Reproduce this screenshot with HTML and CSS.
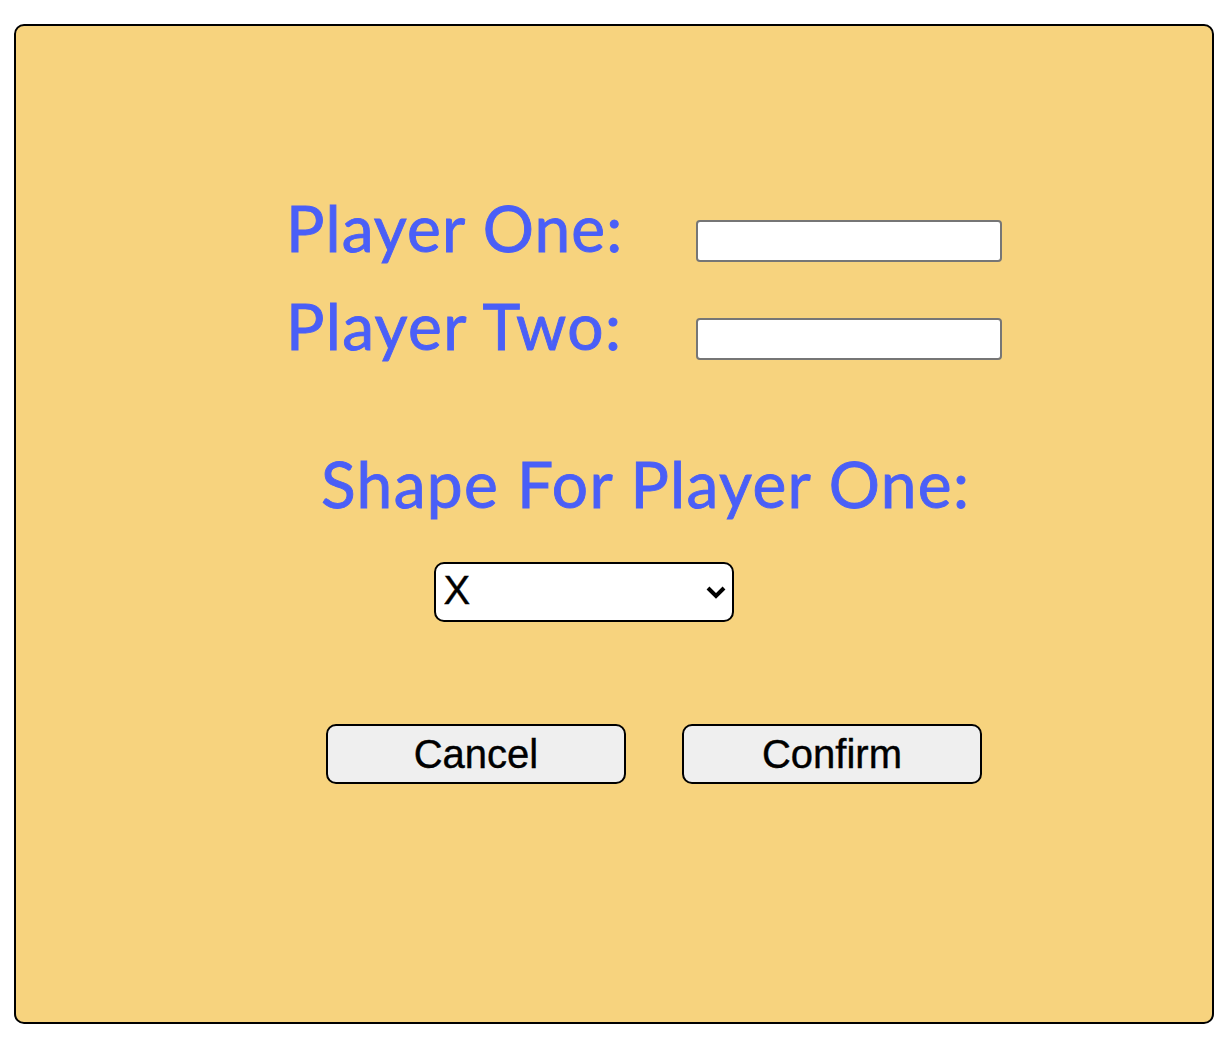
FILE: index.html
```html
<!DOCTYPE html>
<html lang="en">
<head>
<meta charset="utf-8">
<title>Players</title>
<link rel="stylesheet" href="styles.css">
</head>
<body>
<form class="panel">
  <div class="row">
    <label class="label one" for="one">Player One:</label>
    <input class="field" id="one" type="text">
  </div>
  <div class="row">
    <label class="label two" for="two">Player Two:</label>
    <input class="field" id="two" type="text">
  </div>
  <label class="label shape" for="shape">Shape For Player One:</label>
  <div class="select">
    <select class="choice" id="shape"><option>X</option><option>O</option></select>
    <svg class="arrow" width="20" height="14" viewBox="0 0 20 14"><path d="M2 2 10 10 18 2" fill="none" stroke="#000" stroke-width="4"/></svg>
  </div>
  <div class="actions">
    <button class="button" type="button">Cancel</button>
    <button class="button" type="button">Confirm</button>
  </div>
</form>
</body>
</html>
```
FILE: styles.css
```css
* { box-sizing: border-box; }
body { margin: 0; background: #fff; }
.panel {
  width: 1200px;
  height: 1000px;
  margin: 24px 0 0 14px;
  padding-top: 154px;
  border: 2px solid #000;
  border-radius: 10px;
  background: #f7d37e;
}
.row { display: flex; height: 98px; padding-left: 270px; }
.label {
  display: block;
  width: 410px;
  color: #4a5ff7;
  font: 64px/96px Lato, sans-serif;
  white-space: nowrap;
  -webkit-text-stroke: 0.9px #4a5ff7;
}
.one { letter-spacing: 1.15px; }
.two { letter-spacing: 1.4px; }
.field {
  width: 306px;
  height: 42px;
  margin: 40px 0 0;
  border: 2px solid #767676;
  border-radius: 4px;
  background: #fff;
}
.shape { width: auto; margin: 60px 0 0 305px; letter-spacing: 1.37px; }
.select { position: relative; width: 300px; margin: 30px 0 0 418px; }
.choice {
  display: block;
  appearance: none;
  width: 300px;
  height: 60px;
  padding: 0 6px 4px 7.5px;
  border: 2px solid #000;
  border-radius: 10px;
  background: #fff;
  color: #000;
  font: 40px "Liberation Sans", sans-serif;
  -webkit-text-stroke: 0.4px #000;
}
.arrow { position: absolute; top: 24px; right: 8px; }
.actions { display: flex; gap: 56px; margin: 102px 0 0 310px; }
.button {
  width: 300px;
  height: 60px;
  padding: 0;
  border: 2px solid #000;
  border-radius: 10px;
  background: #efefef;
  color: #000;
  font: 40px "Liberation Sans", sans-serif;
  -webkit-text-stroke: 0.4px #000;
}
```
